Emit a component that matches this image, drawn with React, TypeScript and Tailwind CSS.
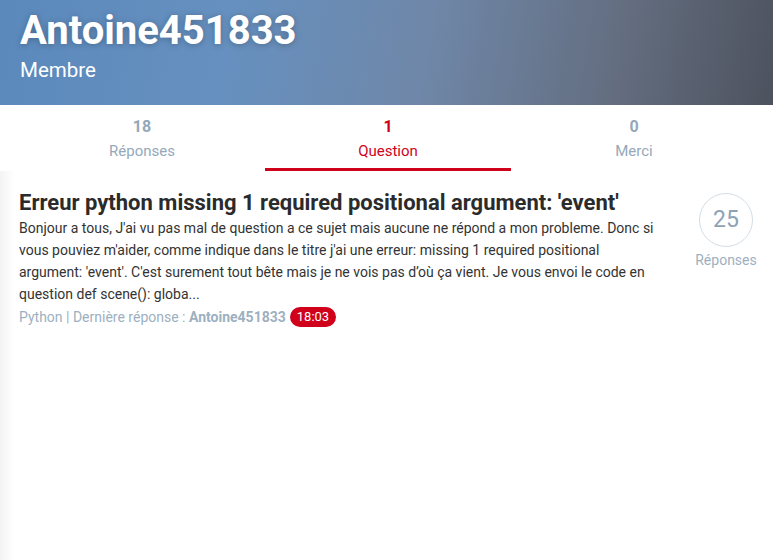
const tabs = [
  { count: '18', label: 'Réponses', active: false },
  { count: '1', label: 'Question', active: true },
  { count: '0', label: 'Merci', active: false },
];

export default function App() {
  return (
    <div className="w-[773px] h-[560px] overflow-hidden bg-white font-['Roboto',sans-serif]">
      <header className="h-[105px] px-5 pt-[8px] bg-[linear-gradient(100deg,#5b89bc_0%,#6690bf_30%,#6f87a8_55%,#636d7f_80%,#4d525e_100%)]">
        <h1 className="text-[40px] leading-[46px] font-bold text-white [text-shadow:0_1px_6px_rgba(0,0,0,0.25)]">
          Antoine451833
        </h1>
        <p className="mt-[3px] text-[20.5px] leading-[26px] text-white">Membre</p>
      </header>

      <nav className="grid grid-cols-[246px_246px_246px] pl-[19px] h-[66px] bg-white">
        {tabs.map((t) => (
          <div
            key={t.label}
            className={`flex flex-col items-center pt-[13px] border-b-[3px] ${
              t.active ? 'border-[#d0021b] text-[#d0021b]' : 'border-transparent text-[#94a8ba]'
            }`}
          >
            <span className="text-[16px] leading-[18px] font-bold">{t.count}</span>
            <span className="text-[15px] leading-[20px] mt-[5px]">{t.label}</span>
          </div>
        ))}
      </nav>

      <main className="h-[389px] bg-[linear-gradient(180deg,#f1f1f1_0px,#ffffff_16px)]">
        <div className="h-full bg-[linear-gradient(90deg,#f3f3f3_0px,#ffffff_14px)]">
          <article className="flex pl-[19px] pr-[16px] pt-[18px]">
            <div className="flex-1 min-w-0">
              <h2 className="text-[22px] leading-[28px] font-bold text-[#2b2b2b] whitespace-nowrap">
                Erreur python missing 1 required positional argument: 'event'
              </h2>
              <p className="w-[640px] text-[14px] leading-[22px] text-[#333333]">
                Bonjour a tous, J'ai vu pas mal de question a ce sujet mais aucune ne répond a mon probleme. Donc si
                vous pouviez m'aider, comme indique dans le titre j'ai une erreur: missing 1 required positional
                argument: 'event'. C'est surement tout bête mais je ne vois pas d’où ça vient. Je vous envoi le code en
                question def scene(): globa...
              </p>
              <div className="mt-[1px] flex items-center text-[14px] leading-[22px] text-[#9db0c1]">
                <span>Python | Dernière réponse :&nbsp;</span>
                <span className="font-bold">Antoine451833</span>
                <span className="ml-[4px] rounded-full bg-[#d0021b] px-[7px] text-[13px] leading-[20px] text-white">
                  18:03
                </span>
              </div>
            </div>
            <div className="w-[62px] flex flex-col items-center shrink-0 pt-[4px]">
              <div className="w-[54px] h-[54px] rounded-full border border-[#d3dde6] flex items-center justify-center text-[23px] text-[#8ea2b4]">
                25
              </div>
              <span className="mt-[3px] text-[14px] leading-[20px] text-[#9db0c1]">Réponses</span>
            </div>
          </article>
        </div>
      </main>
    </div>
  );
}
